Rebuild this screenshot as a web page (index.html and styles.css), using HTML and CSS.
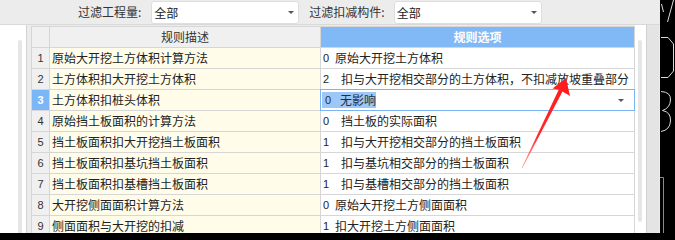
FILE: index.html
```html
<!DOCTYPE html>
<html lang="zh-CN">
<head>
<meta charset="utf-8">
<title>规则设置</title>
<link rel="stylesheet" href="styles.css">
</head>
<body>
<div class="screen">
  <div class="app">
    <div class="toolbar">
      <span class="label">过滤工程量:</span>
      <div class="combo combo-1"><span>全部</span><i class="caret"></i></div>
      <span class="label label-2">过滤扣减构件:</span>
      <div class="combo combo-2"><span>全部</span><i class="caret"></i></div>
    </div>
    <div class="main">
      <div class="side"><div class="vscroll"></div></div>
      <div class="gutter"></div>
      <div class="grid">
        <div class="cell num head"></div>
        <div class="cell hdesc">规则描述</div>
        <div class="cell hopt">规则选项</div>

        <div class="cell num">1</div>
        <div class="cell desc">原始大开挖土方体积计算方法</div>
        <div class="cell opt"><span class="code">0</span><span>原始大开挖土方体积</span></div>

        <div class="cell num">2</div>
        <div class="cell desc">土方体积扣大开挖土方体积</div>
        <div class="cell opt"><span class="code wide">2</span><span>扣与大开挖相交部分的土方体积，不扣减放坡重叠部分</span></div>

        <div class="cell num cur">3</div>
        <div class="cell desc">土方体积扣桩头体积</div>
        <div class="cell opt editing"><span class="sel"><span class="code sc">0</span>无影响</span><i class="caret"></i></div>

        <div class="cell num">4</div>
        <div class="cell desc">原始挡土板面积的计算方法</div>
        <div class="cell opt"><span class="code wide">0</span><span>挡土板的实际面积</span></div>

        <div class="cell num">5</div>
        <div class="cell desc">挡土板面积扣大开挖挡土板面积</div>
        <div class="cell opt"><span class="code wide">1</span><span>扣与大开挖相交部分的挡土板面积</span></div>

        <div class="cell num">6</div>
        <div class="cell desc">挡土板面积扣基坑挡土板面积</div>
        <div class="cell opt"><span class="code wide">1</span><span>扣与基坑相交部分的挡土板面积</span></div>

        <div class="cell num">7</div>
        <div class="cell desc">挡土板面积扣基槽挡土板面积</div>
        <div class="cell opt"><span class="code wide">1</span><span>扣与基槽相交部分的挡土板面积</span></div>

        <div class="cell num">8</div>
        <div class="cell desc">大开挖侧面面积计算方法</div>
        <div class="cell opt"><span class="code">0</span><span>原始大开挖土方侧面面积</span></div>

        <div class="cell num">9</div>
        <div class="cell desc">侧面面积与大开挖的扣减</div>
        <div class="cell opt"><span class="code">1</span><span>扣大开挖土方侧面面积</span></div>
      </div>
      <div class="rstrip"><div class="vscroll vscroll-r"></div></div>
      <div class="rgrey"></div>
    </div>
  </div>
  <div class="cad">
    <svg width="15" height="233" viewBox="660 0 15 233">
      <g fill="none" stroke="#d8d8d8" stroke-width="1">
        <path d="M661.5,4 L663.5,12"/>
        <path d="M673.5,0 L667.5,22"/>
        <path d="M661,37.5 L668,37.5 L673.5,44 L673.5,71 L668,77.5 L661,77.5"/>
        <path d="M661,91.5 Q671,92 670.5,100 Q670,108 662.5,110.5 Q671,112 670.5,121 Q670,130 661,131.5"/>
      </g>
      <path d="M660,177.5 L663.5,177.5 L663.5,233" fill="none" stroke="#8a8a8a" stroke-width="1"/>
    </svg>
  </div>
  <svg class="arrow" width="675" height="233" viewBox="0 0 675 233">
    <defs>
      <linearGradient id="ag" x1="522" y1="168" x2="566" y2="78" gradientUnits="userSpaceOnUse">
        <stop offset="0" stop-color="#ff6a6a" stop-opacity="0.6"/>
        <stop offset="0.35" stop-color="#ff2a2a"/>
        <stop offset="1" stop-color="#ff1a1a"/>
      </linearGradient>
    </defs>
    <polygon fill="url(#ag)" points="566,78 570,96 562.5,91.5 522.3,168.2 521.7,167.8 558.8,89.6 552.5,88.6"/>
  </svg>
</div>
</body>
</html>
```

FILE: styles.css
```css
html, body {
  margin: 0;
  padding: 0;
}

body {
  width: 675px;
  height: 233px;
  overflow: hidden;
  background: #000;
  font-family: "Noto Sans CJK SC", "Noto Sans", sans-serif;
  font-size: 12px;
  color: #222;
}

.screen {
  position: relative;
  display: flex;
  width: 675px;
  height: 233px;
  overflow: hidden;
}

.app {
  width: 660px;
  display: flex;
  flex-direction: column;
  background: #ececec;
}

.toolbar {
  height: 24px;
  border-bottom: 1px solid #d9d9d9;
  display: flex;
  align-items: center;
  padding-left: 78px;
  background: #ececec;
  color: #333;
}

.label {
  line-height: 24px;
  white-space: nowrap;
}

.label-2 {
  margin-left: 10px;
}

.combo {
  height: 23px;
  box-sizing: border-box;
  width: 148px;
  margin-left: 10px;
  background: #fff;
  border: 1px solid #dedede;
  border-radius: 3px;
  display: flex;
  align-items: center;
  padding-left: 2px;
  color: #222;
}

.combo-2 {
  margin-left: 9px;
}

.caret {
  margin-left: auto;
  margin-right: 4px;
  width: 0;
  height: 0;
  border-left: 3px solid transparent;
  border-right: 3px solid transparent;
  border-top: 3px solid #555;
}

.main {
  flex: 1;
  display: flex;
  min-height: 0;
}

.side {
  width: 27px;
  background: #fff;
  border-right: 1px solid #d2d2d2;
  position: relative;
  display: flex;
  justify-content: flex-end;
  padding-top: 15px;
  box-sizing: border-box;
}

.vscroll {
  width: 4px;
  margin-right: 4px;
  background: #e6e6e6;
  border-radius: 2px;
  height: 200px;
}

.gutter {
  width: 4px;
  background: #ececec;
}

.grid {
  width: 604px;
  box-sizing: border-box;
  margin-top: 1px;
  align-self: flex-start;
  display: grid;
  grid-template-columns: 17px 270px 313px;
  grid-auto-rows: 20px;
  gap: 1px;
  padding: 1px;
  background: #d6d6d6;
}

.cell {
  line-height: 20px;
  white-space: nowrap;
  overflow: hidden;
  display: flex;
  align-items: center;
}

.num {
  background: #f0f0f0;
  justify-content: center;
  font-family: "Liberation Sans", "DejaVu Sans", sans-serif;
  font-size: 11px;
  color: #333;
}

.num.cur {
  background: #7bb6f6;
  color: #fff;
  font-weight: bold;
}

.hdesc {
  background: #f0f0f0;
  justify-content: center;
  color: #333;
}

.hopt {
  background: #80b9f6;
  justify-content: center;
  color: #fff;
  font-weight: bold;
}

.desc {
  background: #fffdea;
  padding-left: 2px;
}

.opt {
  background: #fff;
  padding-left: 2px;
}

.code {
  display: inline-block;
  width: 12px;
  font-family: "Liberation Sans", "DejaVu Sans", sans-serif;
  font-size: 11px;
}

.code.wide {
  width: 18px;
}

.opt.editing {
  outline: 1px solid #7bb4f3;
  padding-left: 1px;
  position: relative;
}

.sel {
  background: #9cc7f6;
  line-height: 16px;
  height: 16px;
  padding-left: 3px;
  display: flex;
  align-items: center;
  color: #1f2f44;
}

.code.sc {
  width: 15px;
}

.opt.editing .caret {
  margin-right: 10px;
}

.rstrip {
  width: 11px;
  background: #fff;
  display: flex;
  justify-content: flex-end;
  padding-top: 15px;
  box-sizing: border-box;
}

.vscroll-r {
  height: 182px;
  margin-right: 4px;
}

.rgrey {
  width: 12px;
  background: #e4e4e4;
  border-left: 1px solid #d0d0d0;
}

.cad {
  width: 15px;
  height: 233px;
  background: #000;
}

.cad svg {
  display: block;
}

.arrow {
  position: absolute;
  left: 0;
  top: 0;
  pointer-events: none;
}
```
